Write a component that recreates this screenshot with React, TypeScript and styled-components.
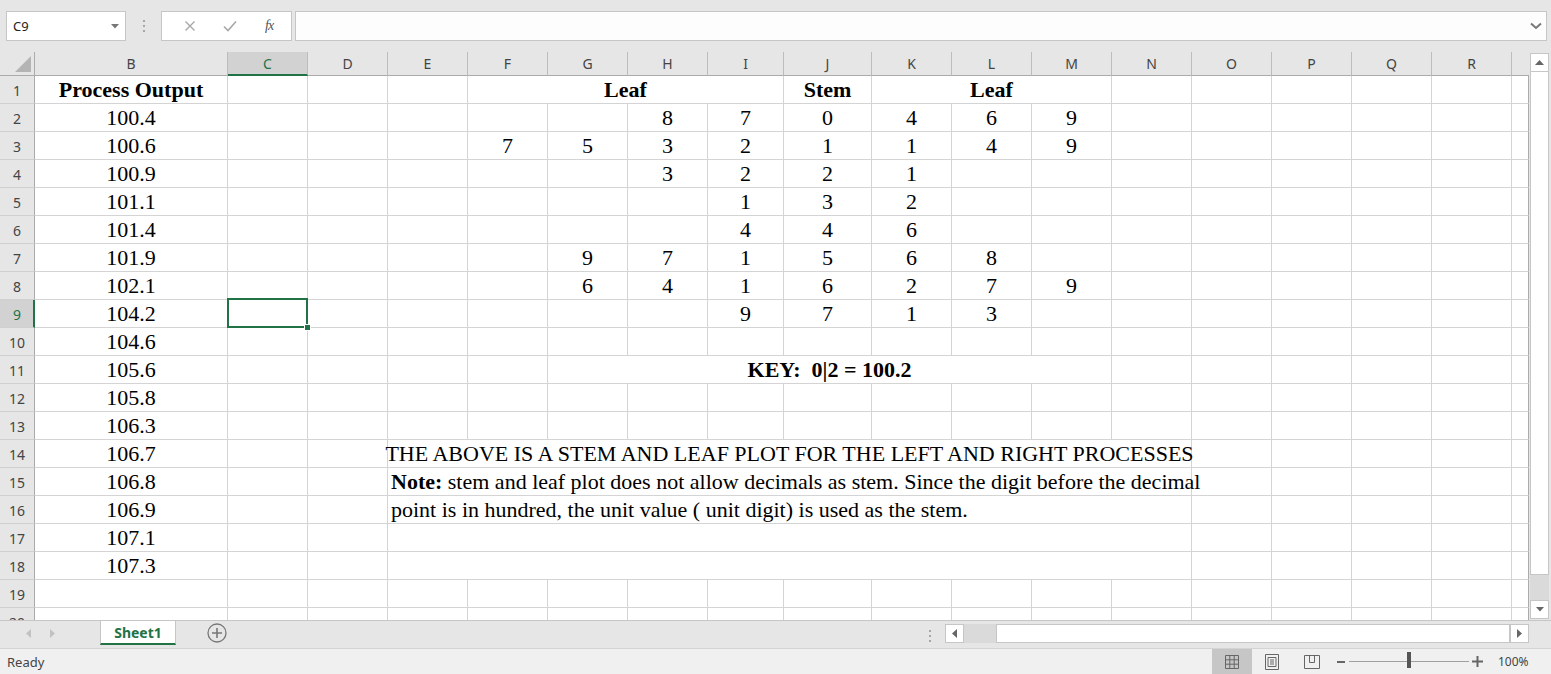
import React from 'react';
import styled, { createGlobalStyle, css } from 'styled-components';

const GlobalStyle = createGlobalStyle`
  html, body { margin: 0; padding: 0; }
  body {
    width: 1551px; height: 674px; overflow: hidden; background: #fff;
    font-family: "Noto Sans", "Open Sans", sans-serif;
  }
  #root { width: 1551px; height: 674px; }
`;

const GREEN = '#217346';
const GRID = '#d4d4d4';

const COLS = ['B', 'C', 'D', 'E', 'F', 'G', 'H', 'I', 'J', 'K', 'L', 'M', 'N', 'O', 'P', 'Q', 'R', 'S'];
const WIDTHS = [193, 80, 80, 80, 80, 80, 80, 76, 88, 80, 80, 80, 80, 80, 80, 80, 80, 17];

const Window = styled.div`
  display: flex;
  flex-direction: column;
  width: 1551px;
  height: 674px;
  background: #e6e6e6;
`;

/* ---------- formula bar ---------- */
const FormulaBar = styled.div`
  flex: none;
  height: 52px;
  box-sizing: border-box;
  padding: 11px 0 0 6px;
  display: flex;
  align-items: flex-start;
`;

const NameBox = styled.div`
  width: 120px;
  height: 30px;
  box-sizing: border-box;
  border: 1px solid #c6c6c6;
  background: #fff;
  display: flex;
  align-items: center;
  justify-content: space-between;
  padding: 0 6px 0 6px;
  font-size: 13px;
  color: #222;
`;

const Dots = styled.div<{ $w: number; $mr?: number }>`
  width: ${p => p.$w}px;
  margin-right: ${p => p.$mr ?? 0}px;
  display: flex;
  flex-direction: column;
  align-items: center;
  justify-content: center;
  gap: 3px;
  height: 30px;
  & > i { width: 2px; height: 2px; background: #a6a6a6; display: block; }
`;

const FxBox = styled.div`
  width: 131px;
  height: 30px;
  box-sizing: border-box;
  border: 1px solid #c6c6c6;
  background: #fff;
  display: flex;
  align-items: center;
  justify-content: space-around;
  padding: 0 4px 0 8px;
`;

const Fx = styled.span`
  font-family: "Liberation Serif", serif;
  font-style: italic;
  font-size: 14px;
  color: #555;
  letter-spacing: -1px;
`;

const FormulaInput = styled.div`
  margin-left: 3px;
  width: 1252px;
  height: 30px;
  box-sizing: border-box;
  border: 1px solid #c6c6c6;
  background: #fdfdfd;
  display: flex;
  align-items: center;
  justify-content: flex-end;
  padding-right: 4px;
`;

/* ---------- main sheet ---------- */
const Main = styled.div`
  flex: none;
  height: 568px;
  display: flex;
`;

const SheetWrap = styled.div`
  width: 1529px;
  height: 568px;
  overflow: hidden;
  background: #fff;
`;

const Grid = styled.div`
  display: grid;
  grid-template-columns: 35px ${WIDTHS.map(w => `${w}px`).join(' ')};
  grid-template-rows: 24px;
  grid-auto-rows: 28px;
`;

const Corner = styled.div`
  box-sizing: border-box;
  background: #e6e6e6;
  border-right: 1px solid #ababab;
  border-bottom: 1px solid #ababab;
  position: relative;
  display: flex;
  align-items: flex-end;
  justify-content: flex-end;
  padding: 0 3px 3px 0;
`;

const ColHeader = styled.div<{ $selected?: boolean; $last?: boolean }>`
  box-sizing: border-box;
  background: ${p => (p.$selected ? '#d2d2d2' : '#e6e6e6')};
  border-right: ${p => (p.$last ? 'none' : '1px solid #bcbcbc')};
  border-bottom: ${p => (p.$selected ? `2px solid ${GREEN}` : '1px solid #ababab')};
  display: flex;
  align-items: center;
  justify-content: center;
  padding-top: ${p => (p.$selected ? '1px' : '0')};
  font-size: 14px;
  color: ${p => (p.$selected ? GREEN : '#444')};
`;

const RowHeader = styled.div<{ $selected?: boolean }>`
  box-sizing: border-box;
  background: ${p => (p.$selected ? '#d2d2d2' : '#e6e6e6')};
  border-right: ${p => (p.$selected ? `2px solid ${GREEN}` : '1px solid #ababab')};
  border-bottom: 1px solid #d0d0d0;
  display: flex;
  align-items: center;
  justify-content: center;
  padding: ${p => (p.$selected ? '2px 0 0 1px' : '2px 0 0 0')};
  font-size: 14px;
  color: ${p => (p.$selected ? GREEN : '#444')};
`;

const Cell = styled.div<{ $span?: number; $align?: 'center' | 'left'; $bold?: boolean; $selected?: boolean; $edge?: boolean }>`
  grid-column: span ${p => p.$span ?? 1};
  position: relative;
  box-sizing: border-box;
  min-width: 0;
  border-right: 1px solid ${p => (p.$edge ? '#ababab' : GRID)};
  border-bottom: 1px solid ${GRID};
  display: flex;
  align-items: flex-start;
  justify-content: ${p => (p.$align === 'left' ? 'flex-start' : 'center')};
  padding-left: ${p => (p.$align === 'left' ? '3px' : '0')};
  padding-top: 1px;
  font-family: "Liberation Serif", "Times New Roman", serif;
  font-size: 22px;
  line-height: 26px;
  font-weight: ${p => (p.$bold ? 700 : 400)};
  color: #000;
  white-space: pre;
  ${p =>
    p.$selected &&
    css`
      &::after {
        content: '';
        position: absolute;
        top: -2px; left: -1px; right: -1px; bottom: -1px;
        border: 2px solid ${GREEN};
        z-index: 2;
        pointer-events: none;
      }
      &::before {
        content: '';
        position: absolute;
        right: -4px; bottom: -4px;
        width: 5px; height: 5px;
        background: ${GREEN};
        border: 1px solid #fff;
        z-index: 3;
      }
    `}
`;

const CellText = styled.span`
  white-space: pre;
`;

const Strong = styled.b`
  font-weight: 700;
`;

/* ---------- vertical scrollbar ---------- */
const VScroll = styled.div`
  width: 22px;
  box-sizing: border-box;
  padding: 1px 2px 1px 1px;
  display: flex;
  flex-direction: column;
  background: #e6e6e6;
`;

const ScrollBtn = styled.div`
  flex: none;
  width: 19px;
  height: 19px;
  box-sizing: border-box;
  background: #fff;
  border: 1px solid #c6c6c6;
  display: flex;
  align-items: center;
  justify-content: center;
`;

const VThumb = styled.div`
  flex: none;
  height: 503px;
  box-sizing: border-box;
  background: #fff;
  border: 1px solid #c6c6c6;
  border-top: none;
`;

const Track = styled.div`
  flex: 1;
  background: #dadada;
`;

/* ---------- tab bar ---------- */
const TabBar = styled.div`
  flex: none;
  height: 28px;
  box-sizing: border-box;
  border-top: 1px solid #c6c6c6;
  display: flex;
  align-items: flex-start;
  background: #e6e6e6;
`;

const TabNav = styled.div`
  width: 100px;
  height: 24px;
  display: flex;
  align-items: center;
  padding-left: 26px;
  box-sizing: border-box;
  gap: 19px;
`;

const SheetTab = styled.div`
  width: 76px;
  height: 24px;
  box-sizing: border-box;
  background: #fff;
  border-left: 1px solid #c6c6c6;
  border-right: 1px solid #c6c6c6;
  border-bottom: 2px solid ${GREEN};
  display: flex;
  align-items: center;
  justify-content: center;
  font-size: 14px;
  font-weight: 700;
  color: ${GREEN};
`;

const AddSheet = styled.div`
  margin-left: 31px;
  margin-top: 2px;
  width: 20px;
  height: 20px;
  display: flex;
`;

const Spacer = styled.div`
  flex: 1;
`;

const HScroll = styled.div`
  margin-top: 3px;
  width: 584px;
  height: 19px;
  display: flex;
  margin-right: 22px;
`;

const HTrack = styled.div`
  width: 32px;
  background: #dadada;
`;

const HThumb = styled.div`
  width: 514px;
  box-sizing: border-box;
  background: #fff;
  border: 1px solid #c6c6c6;
`;

/* ---------- status bar ---------- */
const StatusBar = styled.div`
  flex: none;
  height: 26px;
  box-sizing: border-box;
  border-top: 1px solid #d4d4d4;
  background: #f0f0f0;
  display: flex;
  align-items: stretch;
`;

const Ready = styled.div`
  padding-left: 7px;
  display: flex;
  align-items: center;
  font-size: 13px;
  color: #444;
`;

const ViewBtn = styled.div<{ $active?: boolean }>`
  width: 40px;
  display: flex;
  align-items: center;
  justify-content: center;
  background: ${p => (p.$active ? '#c6c6c6' : 'transparent')};
`;

const ZoomMinus = styled.div`
  margin-left: 5px;
  width: 8px;
  display: flex;
  align-items: center;
  &::after { content: ''; width: 8px; height: 2px; background: #666; }
`;

const Slider = styled.div`
  margin-left: 4px;
  width: 120px;
  position: relative;
  display: flex;
  align-items: center;
  &::before { content: ''; width: 100%; height: 1px; background: #a0a0a0; }
`;

const SliderThumb = styled.div`
  position: absolute;
  left: 58px;
  top: 3px;
  width: 4px;
  height: 16px;
  background: #555;
`;

const ZoomPlus = styled.div`
  margin-left: 3px;
  width: 11px;
  display: flex;
  align-items: center;
  justify-content: center;
`;

const Pct = styled.div`
  margin-left: 15px;
  width: 32px;
  margin-right: 21px;
  display: flex;
  align-items: center;
  font-size: 12px;
  color: #444;
  white-space: nowrap;
`;

/* ---------- data ---------- */
type CellSpec = { span?: number; content?: React.ReactNode; align?: 'center' | 'left'; bold?: boolean };

const processOutput = [
  '100.4', '100.6', '100.9', '101.1', '101.4', '101.9', '102.1', '104.2', '104.6',
  '105.6', '105.8', '106.3', '106.7', '106.8', '106.9', '107.1', '107.3',
];

const stemLeaf: Record<number, Record<string, string>> = {
  2: { H: '8', I: '7', J: '0', K: '4', L: '6', M: '9' },
  3: { F: '7', G: '5', H: '3', I: '2', J: '1', K: '1', L: '4', M: '9' },
  4: { H: '3', I: '2', J: '2', K: '1' },
  5: { I: '1', J: '3', K: '2' },
  6: { I: '4', J: '4', K: '6' },
  7: { G: '9', H: '7', I: '1', J: '5', K: '6', L: '8' },
  8: { G: '6', H: '4', I: '1', J: '6', K: '2', L: '7', M: '9' },
  9: { I: '9', J: '7', K: '1', L: '3' },
};

const merges: Record<number, Record<string, CellSpec>> = {
  1: {
    F: { span: 4, content: 'Leaf', bold: true },
    K: { span: 3, content: 'Leaf', bold: true },
  },
  11: { G: { span: 7, content: 'KEY:  0|2 = 100.2', bold: true } },
  14: { E: { span: 10, content: 'THE ABOVE IS A STEM AND LEAF PLOT FOR THE LEFT AND RIGHT PROCESSES' } },
  15: {
    E: {
      span: 10,
      align: 'left',
      content: (
        <>
          <Strong>Note:</Strong> stem and leaf plot does not allow decimals as stem. Since the digit before the decimal
        </>
      ),
    },
  },
  16: { E: { span: 10, align: 'left', content: 'point is in hundred, the unit value ( unit digit) is used as the stem.' } },
  17: { E: { span: 10 } },
  18: { E: { span: 10 } },
};

function buildRow(r: number): (CellSpec & { col: string; idx: number })[] {
  const out: (CellSpec & { col: string; idx: number })[] = [];
  let i = 0;
  while (i < COLS.length) {
    const col = COLS[i];
    const m = merges[r]?.[col];
    if (m) {
      out.push({ ...m, col, idx: i });
      i += m.span ?? 1;
      continue;
    }
    let spec: CellSpec = {};
    if (col === 'B') {
      if (r === 1) spec = { content: 'Process Output', bold: true };
      else if (r >= 2 && r <= 18) spec = { content: processOutput[r - 2] };
    } else if (r === 1 && col === 'J') {
      spec = { content: 'Stem', bold: true };
    } else if (stemLeaf[r]?.[col]) {
      spec = { content: stemLeaf[r][col] };
    }
    out.push({ ...spec, col, idx: i });
    i += 1;
  }
  return out;
}

const ROWS = Array.from({ length: 20 }, (_, k) => k + 1);

/* ---------- icons ---------- */
const DownTri = ({ c = '#777' }: { c?: string }) => (
  <svg width="8" height="5" viewBox="0 0 8 5"><path d="M0 0h8L4 4.5z" fill={c} /></svg>
);
const UpTri = () => (
  <svg width="9" height="5" viewBox="0 0 9 5"><path d="M0 5h9L4.5 0z" fill="#666" /></svg>
);
const LeftTri = ({ c = '#666' }: { c?: string }) => (
  <svg width="5" height="9" viewBox="0 0 5 9"><path d="M5 0v9L0 4.5z" fill={c} /></svg>
);
const RightTri = ({ c = '#666' }: { c?: string }) => (
  <svg width="5" height="9" viewBox="0 0 5 9"><path d="M0 0v9L5 4.5z" fill={c} /></svg>
);

export default function App() {
  return (
    <>
      <GlobalStyle />
      <Window>
        <FormulaBar>
          <NameBox>
            <span>C9</span>
            <DownTri />
          </NameBox>
          <Dots $w={35}><i /><i /><i /></Dots>
          <FxBox>
            <svg width="12" height="12" viewBox="0 0 12 12">
              <path d="M1.5 1.5l9 9M10.5 1.5l-9 9" stroke="#a8a8a8" strokeWidth="1.4" />
            </svg>
            <svg width="14" height="12" viewBox="0 0 14 12">
              <path d="M1 6.5l4 4L13 1.5" stroke="#a8a8a8" strokeWidth="1.6" fill="none" />
            </svg>
            <Fx>fx</Fx>
          </FxBox>
          <FormulaInput>
            <svg width="12" height="8" viewBox="0 0 12 8">
              <path d="M1 1.5l5 4.5 5-4.5" stroke="#777" strokeWidth="2" fill="none" />
            </svg>
          </FormulaInput>
        </FormulaBar>

        <Main>
          <SheetWrap>
            <Grid>
              <Corner>
                <svg width="16" height="16" viewBox="0 0 16 16"><path d="M0 16H16V0z" fill="#b4b4b4" /></svg>
              </Corner>
              {COLS.map((c, i) => (
                <ColHeader key={c} $selected={c === 'C'} $last={i === COLS.length - 1}>
                  {c === 'S' ? '' : c}
                </ColHeader>
              ))}
              {ROWS.map(r => (
                <React.Fragment key={r}>
                  <RowHeader $selected={r === 9}>{r}</RowHeader>
                  {buildRow(r).map(cell => (
                    <Cell
                      key={cell.col}
                      $span={cell.span}
                      $align={cell.align}
                      $bold={cell.bold}
                      $selected={r === 9 && cell.col === 'C'}
                      $edge={cell.col === 'S'}
                    >
                      {cell.content !== undefined && <CellText>{cell.content}</CellText>}
                    </Cell>
                  ))}
                </React.Fragment>
              ))}
            </Grid>
          </SheetWrap>
          <VScroll>
            <ScrollBtn><UpTri /></ScrollBtn>
            <VThumb />
            <Track />
            <ScrollBtn><DownTri c="#666" /></ScrollBtn>
          </VScroll>
        </Main>

        <TabBar>
          <TabNav>
            <LeftTri c="#c2c2c2" />
            <RightTri c="#c2c2c2" />
          </TabNav>
          <SheetTab>Sheet1</SheetTab>
          <AddSheet>
            <svg width="20" height="20" viewBox="0 0 20 20">
              <circle cx="10" cy="10" r="9" stroke="#777" strokeWidth="1.3" fill="none" />
              <path d="M10 5v10M5 10h10" stroke="#777" strokeWidth="1.6" />
            </svg>
          </AddSheet>
          <Spacer />
          <Dots $w={3} $mr={14}><i /><i /><i /></Dots>
          <HScroll>
            <ScrollBtn><LeftTri /></ScrollBtn>
            <HTrack />
            <HThumb />
            <ScrollBtn><RightTri /></ScrollBtn>
          </HScroll>
        </TabBar>

        <StatusBar>
          <Ready>Ready</Ready>
          <Spacer />
          <ViewBtn $active>
            <svg width="14" height="14" viewBox="0 0 14 14">
              <path d="M0.5 0.5h13v13h-13zM0.5 4.8h13M0.5 9.2h13M4.8 0.5v13M9.2 0.5v13" stroke="#666" strokeWidth="1" fill="none" />
            </svg>
          </ViewBtn>
          <ViewBtn>
            <svg width="14" height="16" viewBox="0 0 14 16">
              <path d="M0.5 0.5h13v15h-13z" stroke="#666" strokeWidth="1" fill="none" />
              <path d="M3 3.5h8v9H3z" stroke="#666" strokeWidth="1" fill="none" />
              <path d="M5 6h4M5 8h4M5 10h4" stroke="#666" strokeWidth="1" />
            </svg>
          </ViewBtn>
          <ViewBtn>
            <svg width="16" height="14" viewBox="0 0 16 14">
              <path d="M0.5 0.5h15v13h-15z" stroke="#666" strokeWidth="1" fill="none" />
              <path d="M5.5 0.5v7h5v-7" stroke="#666" strokeWidth="1" fill="none" />
            </svg>
          </ViewBtn>
          <ZoomMinus />
          <Slider>
            <SliderThumb />
          </Slider>
          <ZoomPlus>
            <svg width="11" height="11" viewBox="0 0 11 11"><path d="M5.5 0v11M0 5.5h11" stroke="#666" strokeWidth="2" /></svg>
          </ZoomPlus>
          <Pct>100%</Pct>
        </StatusBar>
      </Window>
    </>
  );
}
